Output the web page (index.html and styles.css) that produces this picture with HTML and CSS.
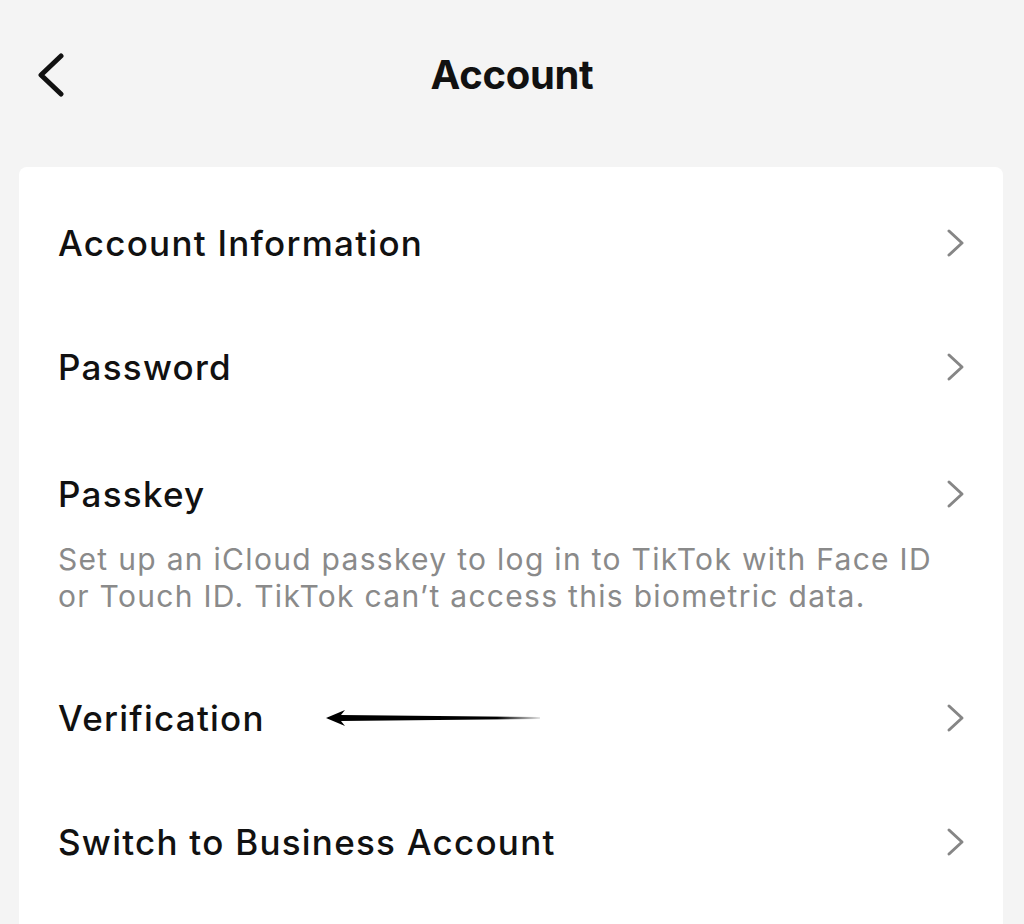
FILE: index.html
```html
<!DOCTYPE html>
<html lang="en">
<head>
    <meta charset="UTF-8">
    <meta name="viewport" content="width=device-width, initial-scale=1.0">
    <title>Account</title>
    <link rel="stylesheet" href="styles.css">
</head>
<body>
    <div class="topbar">
        <a class="back" href="#">
            <svg width="30" height="44" viewBox="0 0 30 44"><polyline points="24,3 4,22 24,41" fill="none" stroke="#111" stroke-width="5" stroke-linecap="round" stroke-linejoin="round"/></svg>
        </a>
        <h1>Account</h1>
    </div>
    <div class="card">
        <div class="item">
            <span class="label">Account Information</span>
            <svg class="arrow" width="24" height="30" viewBox="0 0 24 30"><polyline points="5,3 18,15 5,27" fill="none" stroke="#868686" stroke-width="3" stroke-linecap="round" stroke-linejoin="round"/></svg>
        </div>
        <div class="item">
            <span class="label">Password</span>
            <svg class="arrow" width="24" height="30" viewBox="0 0 24 30"><polyline points="5,3 18,15 5,27" fill="none" stroke="#868686" stroke-width="3" stroke-linecap="round" stroke-linejoin="round"/></svg>
        </div>
        <div class="item passkey">
            <div class="text">
                <span class="label">Passkey</span>
                <p class="desc">Set up an iCloud passkey to log in to TikTok with Face ID or Touch ID. TikTok can’t access this biometric data.</p>
            </div>
            <svg class="arrow" width="24" height="30" viewBox="0 0 24 30"><polyline points="5,3 18,15 5,27" fill="none" stroke="#868686" stroke-width="3" stroke-linecap="round" stroke-linejoin="round"/></svg>
        </div>
        <div class="item">
            <span class="label">Verification</span>
            <span class="pointer">
                <svg width="216" height="20" viewBox="0 0 216 20">
                    <defs>
                        <linearGradient id="fade" x1="0" x2="1" y1="0" y2="0">
                            <stop offset="0" stop-color="#000"/>
                            <stop offset="0.8" stop-color="#000"/>
                            <stop offset="1" stop-color="#000" stop-opacity="0.1"/>
                        </linearGradient>
                    </defs>
                    <polygon points="0,10 19,2 15,7 214,9 214,11 15,13 19,18" fill="url(#fade)"/>
                </svg>
            </span>
            <svg class="arrow" width="24" height="30" viewBox="0 0 24 30"><polyline points="5,3 18,15 5,27" fill="none" stroke="#868686" stroke-width="3" stroke-linecap="round" stroke-linejoin="round"/></svg>
        </div>
        <div class="item">
            <span class="label">Switch to Business Account</span>
            <svg class="arrow" width="24" height="30" viewBox="0 0 24 30"><polyline points="5,3 18,15 5,27" fill="none" stroke="#868686" stroke-width="3" stroke-linecap="round" stroke-linejoin="round"/></svg>
        </div>
    </div>
</body>
</html>
```

FILE: styles.css
```css
*{
    margin: 0;
    padding: 0;
    box-sizing: border-box;
}
html, body{
    background-color: #f4f4f4;
    color: #111;
    font-family: Inter, "Noto Sans", sans-serif;
}
body{
    width: 1024px;
    height: 924px;
    overflow: hidden;
}
.topbar{
    position: relative;
    height: 167px;
    display: flex;
    justify-content: center;
    padding-top: 53px;
}
.topbar h1{
    font-size: 40px;
    font-weight: 700;
    line-height: 44px;
    letter-spacing: -0.3px;
}
.back{
    position: absolute;
    left: 37px;
    top: 53px;
    display: block;
    line-height: 0;
}
.card{
    margin: 0 21px 0 19px;
    padding-top: 14px;
    background-color: #fff;
    border-radius: 8px;
    height: 800px;
}
.item{
    display: flex;
    align-items: center;
    height: 124px;
    padding: 0 35px 0 39px;
}
.label{
    font-size: 35px;
    font-weight: 500;
    line-height: 40px;
    letter-spacing: 1.25px;
}
.text{
    flex: 1;
    display: flex;
    flex-direction: column;
}
.passkey{
    height: auto;
    align-items: flex-start;
    padding-top: 45px;
    padding-bottom: 41px;
}
.passkey .arrow{
    margin-top: 5px;
}
.desc{
    margin-top: 27px;
    font-size: 30px;
    line-height: 37px;
    color: #8a8a8a;
    letter-spacing: 1.3px;
}
.pointer{
    margin-left: 61px;
    line-height: 0;
}
.arrow{
    margin-left: auto;
    flex-shrink: 0;
}
```
